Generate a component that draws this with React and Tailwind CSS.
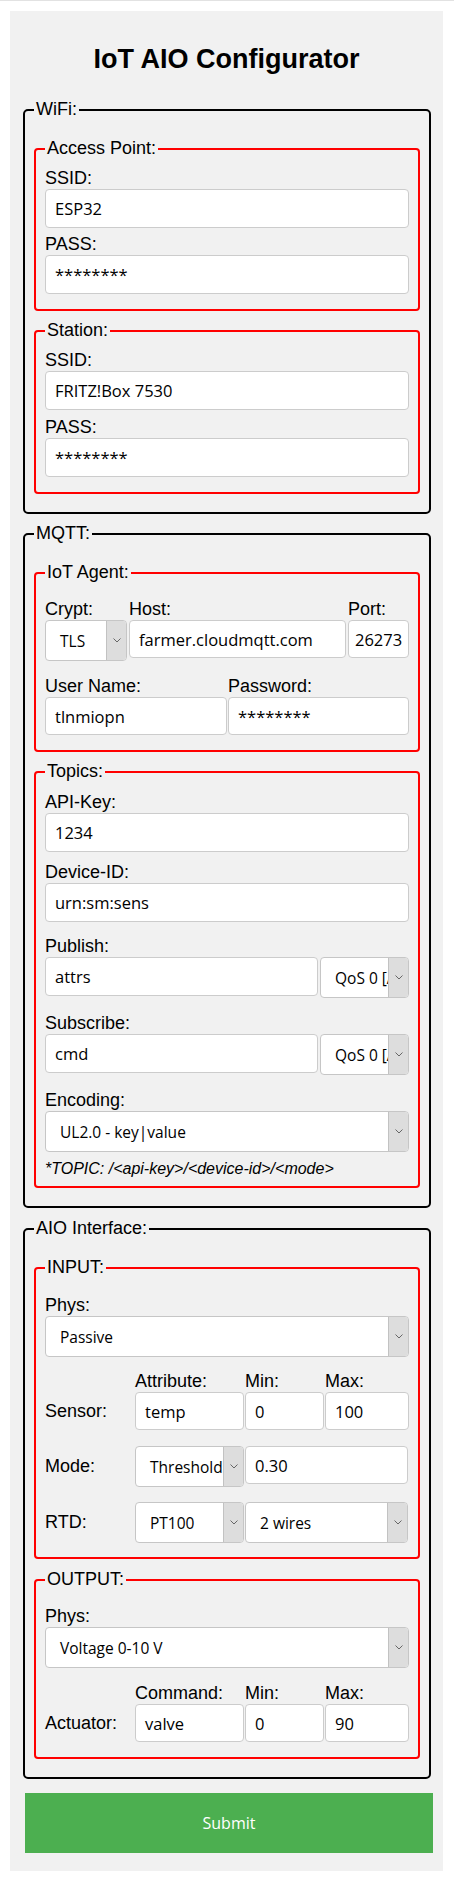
import React from 'react';

const labelCls = "text-[18px] leading-[21px]";
const fieldText = "font-['Open_Sans',sans-serif] text-[16.5px] text-black";
const selectText = "font-['Open_Sans',sans-serif] text-[15.5px] text-black";

function Label({ children, className = '' }) {
  return <div className={`${labelCls} ${className}`}>{children}</div>;
}

function TextBox({ value, className = '', pad = 'pl-[9px]' }) {
  return (
    <div className={`flex items-center overflow-hidden whitespace-nowrap rounded-[4px] border border-[#cccccc] bg-white ${pad} ${fieldText} ${className}`}>
      {value}
    </div>
  );
}

function SelectBox({ value, className = '' }) {
  return (
    <div className={`flex h-[41px] overflow-hidden rounded-[4px] border border-[#c6c6c6] bg-white ${className}`}>
      <div className={`flex min-w-0 flex-1 items-center overflow-hidden whitespace-nowrap pl-[14px] ${selectText}`}>{value}</div>
      <div className="flex w-[20px] shrink-0 items-center justify-center border-l border-[#c2c2c2] bg-[#dddddd]">
        <svg width="8" height="5" viewBox="0 0 8 5">
          <path d="M0.5 0.5 L4 4 L7.5 0.5" fill="none" stroke="#666666" strokeWidth="1" />
        </svg>
      </div>
    </div>
  );
}

function Group({ title, children }) {
  return (
    <fieldset className="ml-[13px] w-[408px] rounded-[5px] border-2 border-black px-[9px] pt-[9px] pb-[18px]">
      <legend className={`px-[2px] ${labelCls}`}>{title}</legend>
      {children}
    </fieldset>
  );
}

function Box({ title, className = 'mt-[9px]', children }) {
  return (
    <fieldset className={`${className} rounded-[4px] border-2 border-[#ff0000] px-[9px]`}>
      <legend className={`px-[2px] ${labelCls}`}>{title}</legend>
      {children}
    </fieldset>
  );
}

export default function App() {
  return (
    <div className="min-h-[1880px] bg-white font-['Liberation_Sans',Arial,sans-serif] leading-[normal] text-black">
      <div className="h-px bg-[#e2e2e2]" />
      <form className="mt-[10px] ml-[10px] w-[433px] bg-[#f1f1f1] pt-[33px] pb-[18px]" onSubmit={(e) => e.preventDefault()}>
        <h1 className="text-center text-[27px] leading-[31px] font-bold">IoT AIO Configurator</h1>

        <div className="mt-[24px]">
          <Group title="WiFi:">
            <Box title="Access Point:" className="mt-[9px] pb-[15px]">
              <Label className="mt-[9px]">SSID:</Label>
              <TextBox value="ESP32" className="h-[39px]" />
              <Label className="mt-[6px]">PASS:</Label>
              <TextBox value="********" className="h-[39px]" />
            </Box>
            <Box title="Station:" className="mt-[9px] pb-[15px]">
              <Label className="mt-[9px]">SSID:</Label>
              <TextBox value="FRITZ!Box 7530" className="h-[39px]" />
              <Label className="mt-[7px]">PASS:</Label>
              <TextBox value="********" className="h-[39px]" />
            </Box>
          </Group>
        </div>

        <div className="mt-[9px]">
          <Group title="MQTT:">
            <Box title="IoT Agent:" className="mt-[9px] pb-[15px]">
              <div className="mt-[16px] grid grid-cols-[82px_217px_61px] items-start gap-x-[2px]">
                <Label>Crypt:</Label>
                <Label>Host:</Label>
                <Label>Port:</Label>
                <SelectBox value="TLS" />
                <TextBox value="farmer.cloudmqtt.com" className="h-[38px]" />
                <TextBox value="26273" className="h-[38px]" pad="pl-[6px]" />
              </div>
              <div className="mt-[15px] grid grid-cols-[182px_181px] gap-x-px">
                <Label>User Name:</Label>
                <Label>Password:</Label>
                <TextBox value="tlnmiopn" className="h-[38px]" />
                <TextBox value="********" className="h-[38px]" />
              </div>
            </Box>
            <Box title="Topics:" className="mt-[9px] pb-[8px]">
              <Label className="mt-[10px]">API-Key:</Label>
              <TextBox value="1234" className="h-[39px]" />
              <Label className="mt-[10px]">Device-ID:</Label>
              <TextBox value="urn:sm:sens" className="h-[39px]" />
              <Label className="mt-[14px]">Publish:</Label>
              <div className="grid grid-cols-[273px_89px] items-start gap-x-[2px]">
                <TextBox value="attrs" className="h-[39px]" />
                <SelectBox value="QoS 0 [At most once]" />
              </div>
              <Label className="mt-[15px]">Subscribe:</Label>
              <div className="grid grid-cols-[273px_89px] items-start gap-x-[2px]">
                <TextBox value="cmd" className="h-[39px]" />
                <SelectBox value="QoS 0 [At most once]" />
              </div>
              <Label className="mt-[15px]">Encoding:</Label>
              <SelectBox value="UL2.0 - key|value" />
              <p className="mt-[8px] text-[16px] leading-[18px] italic">*TOPIC: /&lt;api-key&gt;/&lt;device-id&gt;/&lt;mode&gt;</p>
            </Box>
          </Group>
        </div>

        <div className="mt-[10px]">
          <Group title="AIO Interface:">
            <Box title="INPUT:" className="mt-[9px] pb-[14px]">
              <Label className="mt-[17px]">Phys:</Label>
              <SelectBox value="Passive" />
              <div className="mt-[14px] grid grid-cols-[89px_109px_79px_84px] items-center gap-x-px">
                <div />
                <Label>Attribute:</Label>
                <Label>Min:</Label>
                <Label>Max:</Label>
                <Label>Sensor:</Label>
                <TextBox value="temp" className="h-[38px]" />
                <TextBox value="0" className="h-[38px]" />
                <TextBox value="100" className="h-[38px]" />
              </div>
              <div className="mt-[16px] grid grid-cols-[89px_109px_163px] items-start gap-x-px">
                <Label className="self-center">Mode:</Label>
                <SelectBox value="Threshold" />
                <TextBox value="0.30" className="h-[38px]" />
              </div>
              <div className="mt-[15px] grid grid-cols-[89px_109px_163px] items-center gap-x-px">
                <Label>RTD:</Label>
                <SelectBox value="PT100" />
                <SelectBox value="2 wires" />
              </div>
            </Box>
            <Box title="OUTPUT:" className="mt-[10px] pb-[15px]">
              <Label className="mt-[16px]">Phys:</Label>
              <SelectBox value="Voltage 0-10 V" />
              <div className="mt-[15px] grid grid-cols-[89px_109px_79px_84px] items-center gap-x-px">
                <div />
                <Label>Command:</Label>
                <Label>Min:</Label>
                <Label>Max:</Label>
                <Label>Actuator:</Label>
                <TextBox value="valve" className="h-[38px]" />
                <TextBox value="0" className="h-[38px]" />
                <TextBox value="90" className="h-[38px]" />
              </div>
            </Box>
          </Group>
        </div>

        <button
          type="submit"
          className="mt-[14px] ml-[15px] block h-[60px] w-[408px] bg-[#4caf50] font-['Open_Sans',sans-serif] text-[16px] text-white"
        >
          Submit
        </button>
      </form>
    </div>
  );
}
